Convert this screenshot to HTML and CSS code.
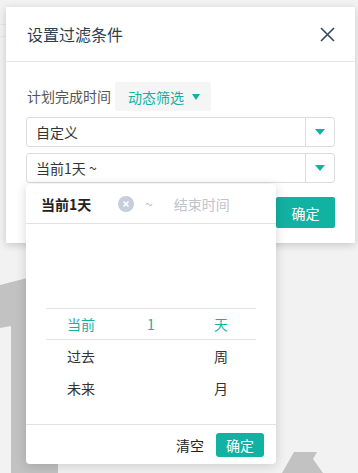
FILE: index.html
```html
<!DOCTYPE html>
<html lang="zh-CN">
<head>
  <meta charset="UTF-8" />
  <meta name="viewport" content="width=device-width, initial-scale=1.0"/>
  <title>设置过滤条件</title>
  <link rel="stylesheet" href="styles.css">
</head>
<body>

  <!-- page behind the dialog -->
  <svg class="backdrop" width="358" height="473" viewBox="0 0 358 473">
    <line x1="0" y1="24.5" x2="8" y2="24.5" stroke="#e6e6e6" />
    <line x1="0" y1="36.5" x2="8" y2="36.5" stroke="#e6e6e6" />
    <polygon points="0,285 58,270 58,473 11,473 11,326 0,328" fill="#c2c2c2" />
    <polygon points="282,473 294,452 317,452 313,459 323,473" fill="#c2c2c2" />
  </svg>

  <div class="modal">
    <div class="modal-header">
      <span class="modal-title">设置过滤条件</span>
      <button class="close">
        <svg width="15" height="15" viewBox="0 0 15 15">
          <path d="M1 1 L14 14 M14 1 L1 14" stroke="#34495e" stroke-width="1.6" fill="none" />
        </svg>
      </button>
    </div>

    <div class="modal-body">
      <div class="field-row">
        <span class="label">计划完成时间</span>
        <span class="mode-btn">动态筛选<i class="caret"></i></span>
      </div>

      <div class="select">
        <span class="select-text">自定义</span>
        <span class="select-arrow"><i class="caret big"></i></span>
      </div>

      <div class="picker-wrap">
        <div class="select">
          <span class="select-text">当前1天 ~</span>
          <span class="select-arrow"><i class="caret big"></i></span>
        </div>

        <div class="dropdown">
          <div class="dd-head">
            <span class="dd-start">当前1天</span>
            <span class="dd-clear">
              <svg width="16" height="16" viewBox="0 0 16 16">
                <circle cx="8" cy="8" r="8" fill="#c6cedb" />
                <path d="M5.5 5.5 L10.5 10.5 M10.5 5.5 L5.5 10.5" stroke="#fff" stroke-width="1.6" />
              </svg>
            </span>
            <span class="dd-sep">~</span>
            <span class="dd-end">结束时间</span>
          </div>

          <div class="dd-wheel">
            <div class="wheel-row active"><span>当前</span><span>1</span><span>天</span></div>
            <div class="wheel-row"><span>过去</span><span></span><span>周</span></div>
            <div class="wheel-row"><span>未来</span><span></span><span>月</span></div>
          </div>

          <div class="dd-foot">
            <button class="link-btn">清空</button>
            <button class="btn-primary small">确定</button>
          </div>
        </div>
      </div>

      <div class="actions">
        <button class="btn-primary">确定</button>
      </div>
    </div>
  </div>

</body>
</html>
```

FILE: styles.css
```css
:root {
  --bg: #f2f2f2;
  --teal: #12b2a3;
  --text: #333;
  --muted: #c0c4cc;
  --line: #e2e2e2;
  --font: "Noto Sans CJK SC", "Liberation Sans", sans-serif;
}
* {
  margin: 0; padding: 0; box-sizing: border-box;
  font-family: var(--font);
}
body {
  width: 358px; height: 473px; overflow: hidden;
  position: relative; background: var(--bg); color: var(--text);
  font-size: 14px;
}
button { border: none; background: none; cursor: pointer; font-size: 14px; }

.backdrop { position: absolute; left: 0; top: 0; }

.modal {
  position: relative; width: 349px; margin: 7px 0 0 6px;
  background: #fff; box-shadow: 0 2px 8px rgba(0,0,0,0.18);
}
.modal-header {
  height: 55px; display: flex; align-items: center; justify-content: space-between;
  padding: 0 20px 0 21px; border-bottom: 1px solid #e6e6e6;
}
.modal-title { font-size: 16px; color: #2f3e4e; line-height: 20px; }
.close { display: flex; width: 15px; height: 15px; }

.modal-body { padding: 20px 20px 15px 20px; }

.field-row { display: flex; align-items: center; gap: 4px; }
.label { color: #555; line-height: 29px; padding-left: 1px; }
.mode-btn {
  height: 29px; display: inline-flex; align-items: center; gap: 8px;
  padding: 0 11px 0 13px; background: #f5f5f5; border-radius: 2px;
  color: var(--teal);
}
.caret {
  display: inline-block; width: 0; height: 0;
  border-top: 6px solid var(--teal);
  border-left: 4.5px solid transparent; border-right: 4.5px solid transparent;
}
.caret.big { border-top-width: 6px; border-left-width: 5px; border-right-width: 5px; }

.select {
  margin-top: 6px; height: 30px; display: flex;
  border: 1px solid #dcdcdc; border-radius: 3px; background: #fff;
}
.select-text { flex: 1; padding-left: 9px; line-height: 28px; color: var(--text); }
.select-arrow {
  width: 29px; border-left: 1px solid #dcdcdc;
  display: flex; align-items: center; justify-content: center;
}

.picker-wrap { position: relative; }

.dropdown {
  position: absolute; top: 31px; left: 0; z-index: 5;
  width: 250px; background: #fff; border-radius: 4px;
  box-shadow: 0 2px 12px rgba(0,0,0,0.16);
}
.dd-head {
  height: 40px; display: flex; align-items: center;
  padding-left: 15px; border-bottom: 1px solid var(--line);
}
.dd-start { width: 77px; font-weight: 700; color: #222; }
.dd-clear { display: flex; }
.dd-sep { margin-left: 11px; color: var(--muted); }
.dd-end { margin-left: 21px; color: var(--muted); }

.dd-wheel { height: 200px; padding: 84px 20px 0; }
.wheel-row {
  height: 32px; display: grid; grid-template-columns: repeat(3, 1fr);
  align-items: center; text-align: center; color: var(--text);
}
.wheel-row.active {
  color: var(--teal);
  border-top: 1px solid var(--line); border-bottom: 1px solid var(--line);
}

.dd-foot {
  height: 40px; display: flex; align-items: center; justify-content: flex-end;
  gap: 12px; padding-right: 12px; border-top: 1px solid var(--line);
}
.link-btn { color: #222; }

.actions { margin-top: 14px; display: flex; justify-content: flex-end; }
.btn-primary {
  width: 59px; height: 31px; border-radius: 2px;
  background: var(--teal); color: #fff;
}
.btn-primary.small { width: 48px; height: 24px; border-radius: 3px; }
```
